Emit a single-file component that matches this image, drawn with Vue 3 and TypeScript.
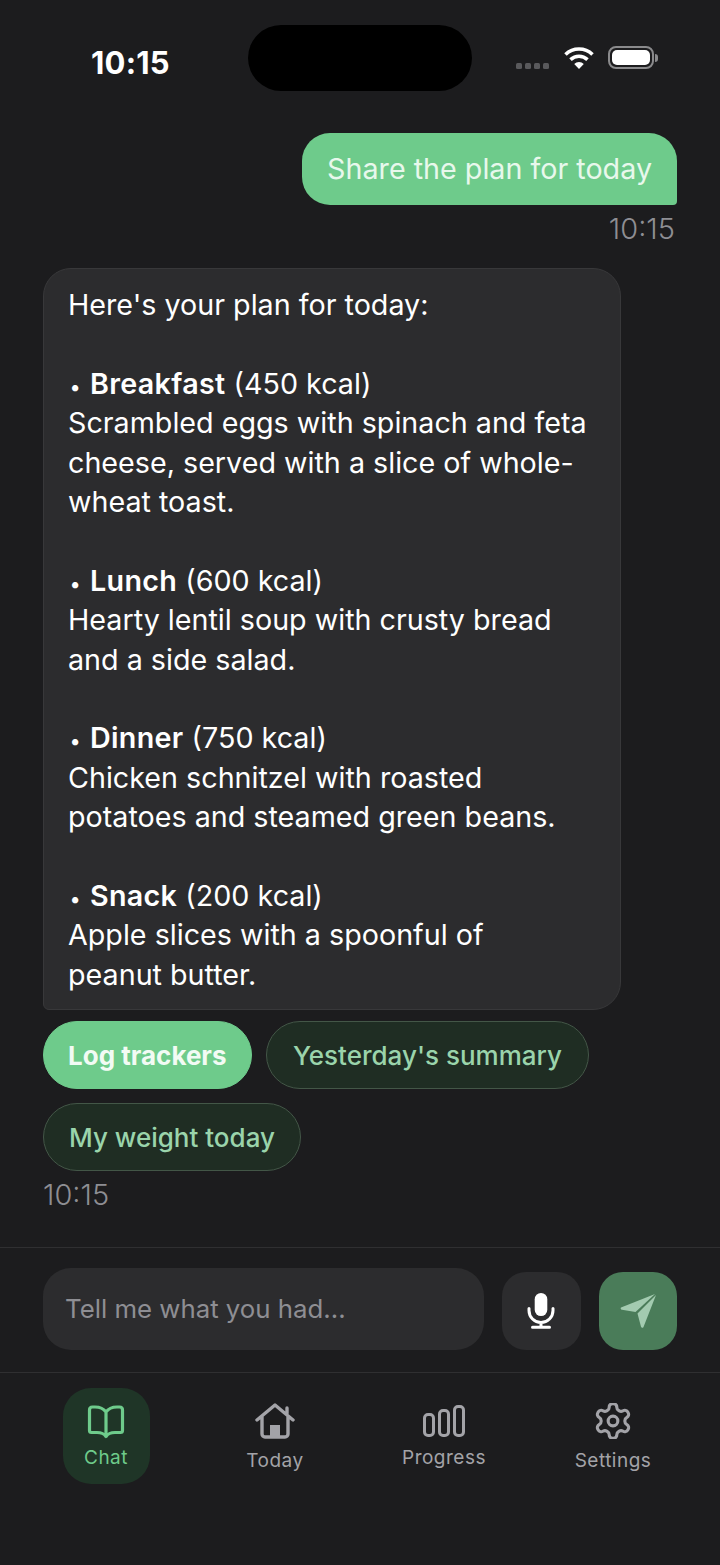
<script setup lang="ts">
interface Meal {
  name: string;
  kcal: number;
  lines: string[];
}

const meals: Meal[] = [
  { name: "Breakfast", kcal: 450, lines: ["Scrambled eggs with spinach and feta", "cheese, served with a slice of whole-", "wheat toast."] },
  { name: "Lunch", kcal: 600, lines: ["Hearty lentil soup with crusty bread", "and a side salad."] },
  { name: "Dinner", kcal: 750, lines: ["Chicken schnitzel with roasted", "potatoes and steamed green beans."] },
  { name: "Snack", kcal: 200, lines: ["Apple slices with a spoonful of", "peanut butter."] },
];
</script>

<template>
  <div class="phone">
    <header class="status">
      <span class="clock">10:15</span>
      <span class="island"></span>
      <div class="status-icons">
        <span class="dots"><i></i><i></i><i></i><i></i></span>
        <svg class="wifi" width="30" height="24" viewBox="0 0 30 24">
          <path d="M1.5 8.5a19.5 19.5 0 0 1 27 0" fill="none" stroke="#fff" stroke-width="3.6" />
          <path d="M6.5 13.6a12.4 12.4 0 0 1 17 0" fill="none" stroke="#fff" stroke-width="3.6" />
          <path d="M10.2 18 15 23l4.800-5a7 7 0 0 0-9.600 0Z" fill="#fff" />
        </svg>
        <span class="battery"><span class="battery-fill"></span></span>
        <span class="battery-tip"></span>
      </div>
    </header>

    <main class="chat">
      <div class="user-row">
        <div class="user-bubble">Share the plan for today</div>
        <div class="time time-right">10:15</div>
      </div>

      <div class="bot-bubble">
        <p class="intro">Here's your plan for today:</p>
        <div v-for="meal in meals" :key="meal.name" class="meal">
          <div><span class="bullet">•</span><b>{{ meal.name }}</b> ({{ meal.kcal }} kcal)</div>
          <div v-for="line in meal.lines" :key="line">{{ line }}</div>
        </div>
      </div>

      <div class="chips">
        <button class="chip chip-solid">Log trackers</button>
        <button class="chip chip-wide">Yesterday's summary</button>
        <button class="chip">My weight today</button>
      </div>
      <div class="time time-left">10:15</div>
    </main>

    <section class="composer">
      <div class="input">Tell me what you had...</div>
      <button class="square mic">
        <svg width="30" height="38" viewBox="0 0 30 38">
          <rect x="8.700" y="1" width="12.600" height="23" rx="6.300" fill="#fff" />
          <path d="M3 16.500v2a12 12 0 0 0 24 0v-2M15 30.500V35M6.500 35.200h17" fill="none" stroke="#fff" stroke-width="3" stroke-linecap="round" />
        </svg>
      </button>
      <button class="square send">
        <svg width="38" height="36" viewBox="0 0 38 36">
          <path d="M2 14.500 36 1 16.500 19 3 16.800C1.600 16.500 1.300 15 2 14.500Z" fill="#a3cbb0" />
          <path d="M37 2 18.500 20.500l3.500 13.200c.4 1.400 2 1.500 2.500.2Z" fill="#a3cbb0" />
        </svg>
      </button>
    </section>

    <nav class="tabs">
      <div class="tab tab-active">
        <svg width="38" height="34" viewBox="0 0 38 34" fill="none" stroke="#6ecb8b" stroke-width="3.200" stroke-linejoin="round" stroke-linecap="round">
          <path d="M19 7C16.500 3.500 13 2 8 2H5.500C3.500 2 2.500 3 2.500 5V25.500c0 1.300.700 2 2 2H10c4 0 7 1 9 4 2-3 5-4 9-4h5.500c1.300 0 2-.7 2-2V5c0-2-1-3-3-3H30C25 2 21.500 3.500 19 7Zm0 0v24.500" />
        </svg>
        <span>Chat</span>
      </div>
      <div class="tab tab-low">
        <svg width="40" height="36" viewBox="0 0 40 36" fill="none" stroke="#a3a3a8" stroke-width="3.400" stroke-linejoin="round" stroke-linecap="round">
          <path d="M2 17 20 2l18 15M7 13.500V31c0 1.700 1.300 3 3 3h20c1.700 0 3-1.300 3-3V13.500M32 10.500V5" />
          <rect x="15" y="22" width="10" height="11" fill="#a3a3a8" stroke="none" />
        </svg>
        <span>Today</span>
      </div>
      <div class="tab">
        <svg width="43" height="34" viewBox="0 0 43 34" fill="none" stroke="#a3a3a8" stroke-width="3">
          <rect x="1.500" y="9.500" width="9" height="21" rx="3.500" />
          <rect x="16.500" y="5.500" width="9" height="25" rx="3.500" />
          <rect x="31.500" y="1.500" width="9" height="29" rx="3.500" />
        </svg>
        <span>Progress</span>
      </div>
      <div class="tab tab-low">
        <svg width="36" height="36" viewBox="1.600 1.600 20.800 20.800" fill="none" stroke="#a3a3a8" stroke-width="1.800" stroke-linejoin="round" stroke-linecap="round">
          <path d="M12.220 2h-.44a2 2 0 0 0-2 2v.18a2 2 0 0 1-1 1.730l-.43.250a2 2 0 0 1-2 0l-.15-.08a2 2 0 0 0-2.730.730l-.22.380a2 2 0 0 0 .730 2.730l.15.100a2 2 0 0 1 1 1.720v.510a2 2 0 0 1-1 1.740l-.15.090a2 2 0 0 0-.730 2.730l.22.380a2 2 0 0 0 2.730.730l.15-.08a2 2 0 0 1 2 0l.43.250a2 2 0 0 1 1 1.730V20a2 2 0 0 0 2 2h.44a2 2 0 0 0 2-2v-.18a2 2 0 0 1 1-1.730l.43-.250a2 2 0 0 1 2 0l.15.080a2 2 0 0 0 2.730-.730l.22-.390a2 2 0 0 0-.730-2.730l-.15-.080a2 2 0 0 1-1-1.740v-.500a2 2 0 0 1 1-1.740l.15-.090a2 2 0 0 0 .730-2.730l-.22-.380a2 2 0 0 0-2.730-.730l-.15.080a2 2 0 0 1-2 0l-.43-.250a2 2 0 0 1-1-1.730V4a2 2 0 0 0-2-2Z" />
          <circle cx="12" cy="12" r="2.800" />
        </svg>
        <span>Settings</span>
      </div>
    </nav>
  </div>
</template>

<style>
html,
body {
  background: #1c1c1e;
}
</style>

<style scoped>
.phone {
  width: 720px;
  height: 1565px;
  overflow: hidden;
  background: #1c1c1e;
  color: #fff;
  font-family: Inter, "Liberation Sans", sans-serif;
}

.status {
  display: flex;
  height: 133px;
  box-sizing: border-box;
  padding-top: 25px;
}

.clock {
  width: 157px;
  margin-left: 91px;
  padding-top: 20px;
  font-size: 31px;
  line-height: 36px;
  font-weight: 700;
  letter-spacing: 0.2px;
}

.island {
  width: 224px;
  height: 66px;
  border-radius: 33px;
  background: #000;
}

.status-icons {
  display: flex;
  height: 44px;
  margin-left: 44px;
  padding-top: 21px;
  box-sizing: border-box;
}

.dots {
  display: flex;
  gap: 3px;
  margin-top: 17px;
}

.dots i {
  width: 6px;
  height: 6px;
  border-radius: 1.500px;
  background: #59595c;
}

.wifi {
  margin-left: 15px;
}

.battery {
  display: flex;
  width: 46px;
  height: 23px;
  margin-left: 14px;
  box-sizing: border-box;
  padding: 2px;
  border: 2px solid #8a8a8c;
  border-radius: 8px;
}

.battery-fill {
  flex: 1;
  border-radius: 5px;
  background: #fff;
}

.battery-tip {
  width: 3px;
  height: 8px;
  margin: 8px 0 0 1px;
  border-radius: 0 3px 3px 0;
  background: #8a8a8c;
}

.chat {
  display: flex;
  flex-direction: column;
  align-items: flex-start;
  height: 1115px;
  box-sizing: border-box;
  padding: 0 43px;
  border-bottom: 1.500px solid #2f2f31;
}

.user-row {
  display: flex;
  flex-direction: column;
  align-items: flex-end;
  align-self: stretch;
}

.user-bubble {
  height: 72px;
  box-sizing: border-box;
  padding: 0 25px;
  border-radius: 28px 28px 4px 28px;
  background: #6ecb8b;
  color: #e8f8ec;
  font-size: 28.700px;
  line-height: 72px;
  white-space: nowrap;
}

.time {
  color: #8e8e93;
  font-size: 29px;
  font-weight: 300;
  line-height: 32px;
}

.time-right {
  margin: 8px 2px 0 0;
}

.time-left {
  margin-top: 8px;
}

.bot-bubble {
  width: 578px;
  height: 742px;
  margin-top: 23px;
  box-sizing: border-box;
  padding: 16px 24px 0;
  border: 1.500px solid #38383a;
  border-radius: 28px 28px 28px 6px;
  background: #2c2c2e;
  font-size: 28.700px;
  line-height: 39.400px;
  white-space: nowrap;
}

.bot-bubble b {
  font-weight: 600;
  letter-spacing: 0.3px;
}

.bullet {
  display: inline-block;
  width: 22px;
  padding-right: 8px;
  box-sizing: border-box;
  font-size: 20px;
  line-height: 1;
  text-align: center;
}

.intro {
  margin: 0;
}

.meal {
  margin-top: 39.400px;
}

.chips {
  display: flex;
  flex-wrap: wrap;
  gap: 14px;
  margin-top: 11px;
}

.chip {
  height: 68px;
  padding: 0 25px;
  border: 1.500px solid #435647;
  border-radius: 34px;
  background: #1f2d23;
  color: #9ad4ab;
  font-family: inherit;
  font-size: 26px;
  font-weight: 500;
}

.chip-wide {
  padding: 0 26.500px;
}

.chip-solid {
  padding: 0 24px;
  border-color: #6ecb8b;
  background: #6ecb8b;
  color: #f2fbf4;
  font-weight: 700;
}

.composer {
  display: flex;
  align-items: flex-end;
  gap: 18px;
  height: 125px;
  box-sizing: border-box;
  padding: 0 43px 22px;
  border-bottom: 1.500px solid #2f2f31;
}

.input {
  width: 441px;
  height: 82px;
  box-sizing: border-box;
  padding-left: 22px;
  border-radius: 28px;
  background: #2c2c2e;
  color: #8e8e93;
  font-size: 25.800px;
  line-height: 82px;
}

.square {
  display: flex;
  align-items: center;
  justify-content: center;
  width: 78.500px;
  height: 78px;
  padding: 0;
  border: 0;
  border-radius: 24px;
}

.mic {
  background: #2c2c2e;
}

.send {
  background: #4a7c59;
}

.tabs {
  display: grid;
  grid-template-columns: repeat(4, 169px);
  margin: 15px 0 0 21.500px;
}

.tab {
  display: flex;
  flex-direction: column;
  align-items: center;
  justify-self: center;
  gap: 6px;
  width: 87px;
  height: 96px;
  box-sizing: border-box;
  padding-top: 17px;
  border-radius: 28px;
  color: #a3a3a8;
  font-size: 19px;
  line-height: 26px;
  letter-spacing: 0.500px;
}

.tab svg {
  flex: none;
}

.tab-low {
  gap: 9px;
  padding-top: 15px;
}

.tab-active {
  background: #1f3527;
  color: #6ecb8b;
}
</style>
